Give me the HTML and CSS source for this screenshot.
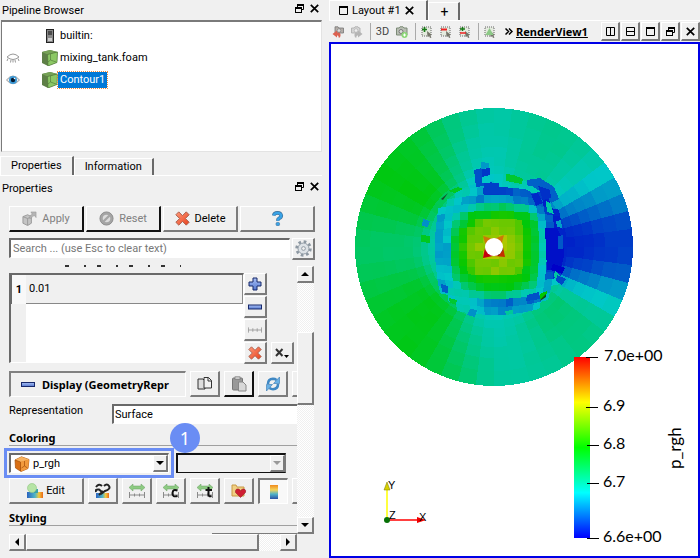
FILE: index.html
```html
<!DOCTYPE html>
<html lang="en">
<head>
<meta charset="utf-8">
<title>Contour1 - RenderView1</title>
<link rel="stylesheet" href="styles.css">
</head>
<body>
<svg class="defs" aria-hidden="true">
  <defs>
    <linearGradient id="gBlue" x1="0" y1="0" x2="0" y2="1"><stop offset="0" stop-color="#a9c0f5"/><stop offset="1" stop-color="#5578cf"/></linearGradient>
    <linearGradient id="gRed" x1="0" y1="0" x2="1" y2="1"><stop offset="0" stop-color="#ff9a7a"/><stop offset="1" stop-color="#e8401c"/></linearGradient>
    <linearGradient id="gMap" x1="0" y1="0" x2="0" y2="1"><stop offset="0" stop-color="#f08a1c"/><stop offset=".35" stop-color="#f4d35a"/><stop offset=".65" stop-color="#4fb3c8"/><stop offset="1" stop-color="#2b4fa5"/></linearGradient>
    <linearGradient id="gMapH"><stop offset="0" stop-color="#2b63c0"/><stop offset=".5" stop-color="#4fb6c8"/><stop offset=".75" stop-color="#f4c83a"/><stop offset="1" stop-color="#e8681c"/></linearGradient>
    <symbol id="float" viewBox="0 0 9 9"><path d="M2.5 3V.9H8.500V5.500H6.500" fill="none" stroke="#000"/><path d="M2 1H9" stroke="#000" stroke-width="2"/><rect x=".5" y="3.500" width="6" height="5" fill="none" stroke="#000"/><path d="M0 4H7" stroke="#000" stroke-width="2"/></symbol>
    <symbol id="close" viewBox="0 0 9 9"><path d="M.8.8 8.200 8.200M8.200.8.8 8.200" stroke="#000" stroke-width="1.700"/></symbol>
    <symbol id="cube" viewBox="0 0 16 16"><path d="M0 2 8 0 15.500 2 15 12.500 6 16 0 13Z" fill="#5e7f47"/><path d="M5.500 4.500 15.500 2 15 12.500 6 16Z" fill="#8cc865"/><path d="M0 2 8 0 15.500 2 5.500 4.500Z" fill="#76a256"/><path d="M5.500 4.500 15.500 2 15 12.500 6 16ZM8.500 4V10L14 12M8.500 10 6 12" fill="none" stroke="#4d7238" stroke-width=".6"/></symbol>
    <symbol id="cross" viewBox="0 0 14 14"><path d="M3.500.8 7 4.300 10.500.8 13.200 3.500 9.700 7 13.200 10.500 10.500 13.200 7 9.700 3.500 13.200.8 10.500 4.300 7 .8 3.500Z" fill="url(#gRed)" stroke="#a8604e" stroke-width=".9"/></symbol>
    <symbol id="range" viewBox="0 0 16 14"><path d="M0 3.500 4 0V2H12V0L16 3.500 12 7V5H4V7Z" fill="#8dcb82" stroke="#6b9e62" stroke-width=".5"/><path d="M.5 8V14M15.500 8V14M5.500 9.500V12.500M10.500 9.500V12.500M0 11H16" stroke="#8a8a8a" fill="none"/></symbol>
    <symbol id="select" viewBox="0 0 12 12"><rect x="1" y="1" width="9" height="9" fill="#e4eadf" stroke="#666" stroke-dasharray="1 1"/><path d="M6 5 11 9 9 9.300 10.500 11.500 9 12 8 9.800 6.500 11Z" fill="#75756a"/></symbol>
  </defs>
</svg>
<div class="app">
  <aside class="side">
    <header class="dock-title"><h2>Pipeline Browser</h2><button aria-label="Float pipeline"><svg><use href="#float"/></svg></button><button aria-label="Close pipeline"><svg><use href="#close"/></svg></button></header>
    <ul class="tree">
      <li><span class="eye"></span><svg class="node server" viewBox="0 0 8 14"><rect x=".5" y=".5" width="7" height="13" fill="#888" stroke="#222"/><path d="M2 3H6M2 5H6" stroke="#111"/><path d="M2 9H6V12H2Z" fill="#ccc"/></svg><span class="name">builtin:</span></li>
      <li><span class="eye"><svg viewBox="0 0 14 10"><path d="M1 4Q7-2 13 4M1 4Q7 9 13 4M2 5.500 1 8M5 7 4.500 9.500M9 7 9.500 9.500M12 5.500 13 8M7 7V9.500" fill="none" stroke="#999"/></svg></span><svg class="node"><use href="#cube"/></svg><span class="name">mixing_tank.foam</span></li>
      <li><span class="eye"><svg viewBox="0 0 14 10"><path d="M.5 5Q7-3 13.500 5 7 12.500.5 5Z" fill="#eee" stroke="#999"/><circle cx="7" cy="5" r="4" fill="#3e9bd8"/><circle cx="7" cy="5" r="2.200" fill="#061930"/><circle cx="8.500" cy="3.500" r=".8" fill="#fff"/></svg></span><svg class="node"><use href="#cube"/></svg><span class="name chosen">Contour1</span></li>
    </ul>
    <nav class="tabs"><button class="tab on">Properties</button><button class="tab">Information</button></nav>
    <header class="dock-title second"><h2>Properties</h2><button aria-label="Float properties"><svg><use href="#float"/></svg></button><button aria-label="Close properties"><svg><use href="#close"/></svg></button></header>
    <div class="actions">
      <button class="btn dark" disabled><svg viewBox="0 0 16 16"><path d="M1 6 6 4 10 6V13L6 15.500 1 13Z" fill="#c4c4c4" stroke="#999"/><path d="M1 6 6 8 10 6M6 8V15" stroke="#999" fill="none"/><path d="M8 8Q8 4 11 3.500L9.500 1H15V7L13.500 5Q10 5 10 8Z" fill="#b5b5b5" stroke="#999" stroke-width=".6"/></svg>Apply</button>
      <button class="btn dark" disabled><svg viewBox="0 0 16 16"><circle cx="8" cy="8" r="7" fill="#a5a5a5" stroke="#8c8c8c"/><circle cx="8" cy="8" r="4" fill="#dcdcdc"/><path d="M4.500 11.500 11.500 4.500" stroke="#a5a5a5" stroke-width="2.500"/></svg>Reset</button>
      <button class="btn"><svg><use href="#cross"/></svg>Delete</button>
      <button class="btn" aria-label="Help"><svg viewBox="0 0 14 14"><path d="M3.500 4.200Q4 1.800 7 1.800T10.500 4.400Q10.500 6 8.500 6.800 7.300 7.400 7.300 9" fill="none" stroke="#3a6f9c" stroke-width="3.400"/><path d="M3.500 4.200Q4 1.800 7 1.800T10.500 4.400Q10.500 6 8.500 6.800 7.300 7.400 7.300 9" fill="none" stroke="#39a3e6" stroke-width="2.200"/><rect x="5.700" y="10.700" width="3.200" height="3" rx="1" fill="#39a3e6" stroke="#3a6f9c" stroke-width=".6"/></svg></button>
    </div>
    <div class="find"><input class="search" type="text" aria-label="Search properties" placeholder="Search ... (use Esc to clear text)"><button class="btn" aria-label="Advanced"><svg viewBox="0 0 18 18"><circle cx="9" cy="9" r="7.200" fill="none" stroke="#8d98a2" stroke-width="3" stroke-dasharray="2.800 2.850"/><circle cx="9" cy="9" r="5.800" fill="#dde2e6" stroke="#8d98a2"/><circle cx="9" cy="9" r="2" fill="#f0f0f0" stroke="#8d98a2"/></svg></button></div>

    <div class="scroller">
      <div class="port">
        <div class="clipped" aria-hidden="true"></div>
        <div class="values">
          <table class="grid"><tbody><tr><th scope="row">1</th><td>0.01</td></tr></tbody></table>
          <div class="tools">
            <button class="btn" aria-label="Add value"><svg viewBox="0 0 14 14"><path d="M5 1H9V5H13V9H9V13H5V9H1V5H5Z" fill="url(#gBlue)" stroke="#17286b"/></svg></button>
            <button class="btn" aria-label="Remove value"><svg viewBox="0 0 14 14"><rect x=".5" y="5" width="13" height="4" fill="url(#gBlue)" stroke="#17286b"/></svg></button>
            <button class="btn" aria-label="Add range"><svg viewBox="0 0 16 14"><path d="M.5 4V10M15.500 4V10M5.500 5V9M10.500 5V9M0 7H16" stroke="#999" fill="none"/></svg></button>
            <button class="btn" aria-label="Remove all"><svg><use href="#cross"/></svg></button>
          </div>
          <button class="btn scale" aria-label="Scale"><svg viewBox="0 0 16 14"><path d="M2 3 8.500 10M8.500 3 2 10" stroke="#333" stroke-width="2"/><path d="M10 9H15L12.500 12Z"/></svg></button>
        </div>
        <div class="display">
          <button class="toggle"><svg viewBox="0 0 14 6"><rect x=".5" y=".5" width="13" height="4" fill="url(#gBlue)" stroke="#17286b"/></svg><span>Display (GeometryRepr</span></button>
          <button class="btn ic" aria-label="Copy"><svg viewBox="0 0 16 16"><path d="M1 3H6L8 5V13H1Z" fill="#ddd" stroke="#333"/><path d="M7 1.500H11.500L14.500 4.500V12H7Z" fill="#f2f2f2" stroke="#333"/><path d="M11 1.500V5H14.500" fill="none" stroke="#333"/></svg></button>
          <button class="btn ic dark" aria-label="Paste"><svg viewBox="0 0 16 16"><rect x="1.500" y="2" width="10" height="12" rx="1" fill="#999" stroke="#777"/><rect x="4" y=".8" width="5" height="2.500" fill="#ccc" stroke="#777" stroke-width=".7"/><path d="M7.500 6H12L15 9V15H7.500Z" fill="#d8d8d8" stroke="#888"/></svg></button>
          <button class="btn ic" aria-label="Reload"><svg viewBox="0 0 16 16"><path d="M3 8Q3 3 8 2.800 10 2.800 11.500 4" fill="none" stroke="#3f88c4" stroke-width="2.600"/><path d="M14.500 1V7.500H8.500Z" fill="#69b1e6" stroke="#3577ae" stroke-width=".6"/><path d="M13 8Q13 13 8 13.200 6 13.200 4.500 12" fill="none" stroke="#3f88c4" stroke-width="2.600"/><path d="M1.500 15V8.500H7.500Z" fill="#69b1e6" stroke="#3577ae" stroke-width=".6"/></svg></button>
          <button class="btn ic" aria-label="Save defaults"></button>
        </div>
        <div class="field"><label for="rep">Representation</label><input id="rep" type="text" value="Surface"></div>
        <h3>Coloring</h3>
        <div class="pick">
          <div class="combo marked">
            <svg class="solid" viewBox="0 0 16 16"><path d="M1 4 7.500.8 15 3.500 14 12.500 7 15.500 1.500 12Z" fill="#d96f14" stroke="#a34d08" stroke-width=".7"/><path d="M6.500 6 15 3.500 14 12.500 7 15.500Z" fill="#f29a3c"/><path d="M1 4 7.500.8 15 3.500 6.500 6Z" fill="#f7b25f"/><path d="M10.500 5V10L13.500 12M10.500 10 7.500 12M1 4 6.500 6V15" fill="none" stroke="#a34d08" stroke-width=".7"/></svg>
            <select aria-label="Color by"><option>p_rgh</option></select><span class="drop"></span>
            <span class="badge">1</span>
          </div>
          <div class="combo idle"><select aria-label="Component" disabled><option></option></select><span class="drop"></span></div>
        </div>
        <div class="maps">
          <button class="btn edit"><svg viewBox="0 0 16 16"><path d="M0 9H16V15H0Z" fill="url(#gMapH)"/><rect x="7" y="6" width="4" height="4" fill="#39a1ab"/><circle cx="5" cy="5" r="4.500" fill="#b6e4a5" stroke="#8fc580" stroke-width=".6"/></svg>Edit</button>
          <button class="btn ic" aria-label="Use separate color map"><svg viewBox="0 0 16 16"><path d="M1 10H14V15H1Z" fill="url(#gMapH)"/><path d="M1 4Q4 0 7 3M1 9Q0 6 4 6.500L7 9M9 3Q12 0 14 3T10 8L6 11M4 12 8 8" fill="none" stroke="#222" stroke-width="2"/></svg></button>
          <button class="btn ic" aria-label="Rescale to data range"><svg><use href="#range"/></svg></button>
          <button class="btn ic" aria-label="Rescale to custom range"><svg viewBox="0 0 16 14"><use href="#range"/><path d="M14.500 6.500Q10 4.500 9.500 9T14.500 12" fill="none" stroke="#111" stroke-width="2"/></svg></button>
          <button class="btn ic" aria-label="Rescale over time"><svg viewBox="0 0 16 14"><use href="#range"/><path d="M11.500 3V10.500Q11.500 13 14.500 12M8.500 6H15" fill="none" stroke="#111" stroke-width="2"/></svg></button>
          <button class="btn ic" aria-label="Choose preset"><svg viewBox="0 0 16 16"><path d="M1 2H5L6 4H13V13H1Z" fill="#f1cf83" stroke="#c89a45"/><path d="M9.500 14.500 4.500 9.500Q4 5.500 7.500 6 9 6.300 9.500 8 10.500 5.500 13 6 15.500 7 14.500 9.500Z" fill="#cf1f33" stroke="#8d1220" stroke-width=".5"/></svg></button>
          <button class="btn ic pressed" aria-label="Show color legend"><svg viewBox="0 0 16 16"><rect x="4" y="1" width="8" height="14" fill="url(#gMap)"/></svg></button>
          <button class="btn ic" aria-label="Edit legend"></button>
        </div>
        <h3>Styling</h3>
      </div>
      <div class="vbar"><button class="btn arrow up" aria-label="Scroll up"></button><i class="space"></i><i class="thumb"></i><i class="rest"></i><button class="btn arrow down" aria-label="Scroll down"></button></div>
    </div>
    <div class="hbar"><button class="btn arrow left" aria-label="Scroll left"></button><i class="thumb"></i><i class="rest"></i><button class="btn arrow right" aria-label="Scroll right"></button></div>
  </aside>

  <main class="main">
    <nav class="tabs top"><button class="tab on"><svg viewBox="0 0 9 9"><path d="M.5 1V8.500H8.500V1" fill="none" stroke="#000"/><path d="M0 1H9" stroke="#000" stroke-width="2"/></svg>Layout #1<svg><use href="#close"/></svg></button><button class="tab">+</button></nav>
    <div class="bar">
      <button class="tool" aria-label="Undo camera"><svg viewBox="0 0 12 12"><path d="M3 .8H6L7 2H11.500V7H3Z" fill="#b5aea9" stroke="#777" stroke-width=".8"/><circle cx="7" cy="4.500" r="1.800" fill="#ddd" stroke="#777" stroke-width=".6"/><path d="M8 11.500Q10 6 5 6.500V4.500L.5 8 5 11.500V9.500Q7 9 6.500 11.500Z" fill="#dc6150"/></svg></button>
      <button class="tool" aria-label="Redo camera"><svg viewBox="0 0 12 12"><path d="M.5 2H3L4 .8H7L8 2H9V7H.5Z" fill="#d4d4d4" stroke="#aaa" stroke-width=".8"/><circle cx="5" cy="4.500" r="1.800" fill="#eee" stroke="#aaa" stroke-width=".6"/><path d="M4 11.500Q2 6 7 6.500V4.500L11.500 8 7 11.500V9.500Q5 9 5.500 11.500Z" fill="#b5b5b5"/></svg></button>
      <i class="rule"></i>
      <button class="tool wide">3D</button>
      <button class="tool" aria-label="Adjust camera"><svg viewBox="0 0 12 12"><path d="M.5 2H3L4 .8H7L8 2H11V9H.5Z" fill="#b9bfb4" stroke="#7c8a76"/><circle cx="5" cy="5.500" r="2" fill="#ddd" stroke="#777"/><circle cx="8.500" cy="9" r="3" fill="#8cd878"/><path d="M7 9H10M8.500 7.500V10.500" stroke="#fff"/></svg></button>
      <i class="rule"></i>
      <button class="tool" aria-label="Add selection"><svg viewBox="0 0 12 12"><use href="#select"/><path d="M1 3.500H6M3.500 1V6" stroke="#187a18" stroke-width="1.600"/></svg></button>
      <button class="tool" aria-label="Subtract selection"><svg viewBox="0 0 12 12"><use href="#select"/><path d="M1 3.500H7" stroke="#e22" stroke-width="2"/></svg></button>
      <button class="tool" aria-label="Toggle selection"><svg viewBox="0 0 12 12"><use href="#select"/><path d="M1 3H6M3.500 1V5" stroke="#187a18" stroke-width="1.500"/><path d="M1 7H7" stroke="#e22" stroke-width="1.500"/></svg></button>
      <i class="rule"></i>
      <button class="tool" aria-label="Select cells"><svg viewBox="0 0 12 12"><use href="#select"/><path d="M1.500 9 5.500 2 9.500 9Z" fill="#8cc987"/></svg></button>
      <button class="more" aria-label="More tools"><svg viewBox="0 0 8 7"><path d="M.5.5 3.500 3.500.5 6.500M4 .5 7 3.500 4 6.500" fill="none" stroke="#000" stroke-width="1.500"/></svg></button>
      <a class="view" href="#view">RenderView1</a>
      <span class="wins">
        <button class="btn" aria-label="Split horizontal"><svg viewBox="0 0 9 9"><path d="M.5.5H8.500V8.500H.5ZM4.500 0V9" fill="none" stroke="#000"/></svg></button>
        <button class="btn" aria-label="Split vertical"><svg viewBox="0 0 9 9"><path d="M.5.5H8.500V8.500H.5ZM0 4.500H9" fill="none" stroke="#000"/></svg></button>
        <button class="btn" aria-label="Maximize"><svg viewBox="0 0 9 9"><path d="M.5 1V8.500H8.500V1" fill="none" stroke="#000"/><path d="M0 1H9" stroke="#000" stroke-width="2"/></svg></button>
        <button class="btn" aria-label="Float view"><svg><use href="#float"/></svg></button>
        <button class="btn" aria-label="Close view"><svg><use href="#close"/></svg></button>
      </span>
    </div>
    <div class="view3d" id="view">
      <svg class="scene" viewBox="331 44 367 512" role="img" aria-label="Pressure field on the tank">
        <defs><linearGradient id="legend" x1="0" y1="0" x2="0" y2="1"><stop offset="0" stop-color="#f00"/><stop offset=".25" stop-color="#ff0"/><stop offset=".5" stop-color="#0f0"/><stop offset=".75" stop-color="#0ff"/><stop offset="1" stop-color="#00f"/></linearGradient></defs>
        <g id="field" shape-rendering="crispEdges"></g>
        <g>
          <path d="M483 236 493 239 486 246ZM504 235 501 246 494 239Z" fill="#cc7808"/>
          <path d="M483 258 485 248 493 256Z" fill="#c40010"/><path d="M505 257 494 256 503 247Z" fill="#c43000"/><path d="M498 253 503 247 503 250 498 256Z" fill="#421a08"/>
          <circle cx="494" cy="247" r="9" fill="#fff"/>
          <path d="M441 199 448 193 443 200Z" fill="#174b2d"/>
          <path d="M541 299 546 294 546 297 540 301Z" fill="#154a18"/>
        </g>
        <rect x="574" y="357" width="16" height="181" fill="url(#legend)"/>
        <path d="M586 357.500H598M586 407.500H598M587 445.500H599M587 483.500H599M587 538.500H599" stroke="#000"/>
        <g class="ticks"><text x="604" y="361">7.0e+00</text><text x="603" y="411">6.9</text><text x="603" y="449">6.8</text><text x="603" y="487">6.7</text><text x="603" y="542">6.6e+00</text><text class="title" transform="translate(681 469) rotate(-90)">p_rgh</text></g>
        <g class="axes"><path d="M387 520V489" stroke="#ff0" stroke-width="1.500"/><path d="M384 490 387 482 390 490Z" fill="#d8d000" stroke="#777700" stroke-width=".5"/><path d="M387 520H418" stroke="#f00" stroke-width="1.500"/><path d="M417 517 426 520 417 523Z" fill="#e00"/><circle cx="387" cy="520" r="3" fill="#067006"/><text x="388" y="489">Y</text><text x="419" y="521">X</text><text x="389" y="519">Z</text></g>
      </svg>
    </div>
  </main>
</div>
<script src="field.js"></script>
</body>
</html>
```

FILE: styles.css
```css
* { box-sizing: border-box; }
html, body { height: 100%; margin: 0; }
body { background: #f0f0f0; color: #000; font: 11px/14px Roboto, "Liberation Sans", sans-serif; overflow: hidden; }
button, input, select { font: inherit; color: inherit; margin: 0; padding: 0; border-radius: 0; }
button { border: 0; background: none; display: flex; align-items: center; justify-content: center; }
h2, h3, ul { margin: 0; padding: 0; font-size: inherit; }
h2 { font-weight: 400; }
i { display: block; }
svg { display: block; flex: none; }
.defs { position: absolute; width: 0; height: 0; }

.app { display: flex; min-height: 100vh; }
.side { flex: 0 0 47%; display: flex; flex-direction: column; min-width: 0; padding: 0 7px 7px 0; }
.main { flex: 1; display: flex; flex-direction: column; min-width: 0; }

.dock-title { display: flex; align-items: center; height: 20px; padding: 2px 3px 0 2px; }
.dock-title h2 { flex: 1; }
.dock-title button { width: 9px; height: 9px; margin: 0 0 6px 6px; }
.dock-title svg { width: 9px; height: 9px; }
.dock-title.second { height: 30px; padding: 0 3px 4px 2px; }

.tree { list-style: none; height: 132px; margin-left: 1px; padding-top: 3px; background: #fff; border: solid; border-width: 2px 1px 1px; border-color: #7a7a7a #e3e3e3 #e3e3e3 #7a7a7a; }
.tree li { display: flex; align-items: center; height: 22px; }
.eye { width: 40px; padding-left: 4px; }
.eye svg { width: 14px; height: 10px; }
.node { width: 16px; height: 16px; }
.node.server { width: 16px; height: 14px; }
.name { padding: 1px 2px; }
.name.chosen { background: #0078d7; color: #fff; outline: 1px dotted #f08a3c; }

.tabs { display: flex; align-items: flex-end; height: 24px; border-bottom: 1px solid #fff; }
.tab { height: 17px; padding: 0 10px; gap: 4px; border: 1px solid #fff; border-width: 1px 2px 0 1px; border-right-color: #696969; }
.tab.on { height: 19px; }
.tab svg { width: 9px; height: 9px; }
.tabs.top { height: 21px; }
.tabs.top .tab.on { height: 20px; padding: 0 12px 0 9px; }
.tabs.top .tab + .tab { padding: 0 9px 0 12px; height: 18px; font-size: 14px; }

.btn { background: #f0f0f0; border: solid; border-width: 1px 2px 2px 1px; border-color: #fff #7b7b7b #7b7b7b #fff; }
.btn.dark { border-color: #fff #111 #111 #fff; }
.btn svg { width: 16px; height: 16px; }
.btn:disabled { color: #808080; }
.actions { display: grid; grid-template-columns: repeat(4, 1fr); gap: 2px; margin: 0 7px 0 9px; }
.actions .btn { height: 26px; gap: 5px; }
.actions .btn svg { width: 15px; height: 15px; }
.find { display: flex; gap: 2px; margin: 6px 7px 5px 9px; }
.find .btn { width: 23px; height: 22px; }
.find .btn svg { width: 17px; height: 17px; }
input[type=text] { background: #fff; border: solid; border-width: 2px 1px 1px 2px; border-color: #696969 #fff #fff #696969; outline: 0; }
.search { flex: 1; min-width: 0; height: 20px; padding: 0 2px; }
.search::placeholder { color: #777; opacity: 1; }

.scroller { flex: 1; display: flex; min-height: 0; margin-right: 8px; }
.port { flex: 1; min-width: 0; position: relative; padding-left: 9px; overflow: hidden; }
.clipped { width: 116px; height: 2px; margin: 0 0 6px 56px; background: repeating-linear-gradient(90deg, #333 0 4px, transparent 4px 19px, #333 19px 21px, transparent 21px 32px); }
.values { display: flex; align-items: flex-end; height: 91px; }
.grid { flex: none; display: block; width: 235px; height: 90px; margin-bottom: 1px; border-spacing: 0; background: linear-gradient(90deg, #f0f0f0 15px, #fff 15px); border: solid; border-width: 2px 1px 1px 2px; border-color: #696969 #fff #fff #696969; }
.grid tbody { display: block; }
.grid tr { display: flex; height: 29px; background: #f0f0f0; }
.grid th { width: 15px; border-left: 1px solid #696969; background: #f8f8f8; line-height: 29px; padding: 0; }
.grid td { flex: 1; padding: 0 3px; line-height: 27px; border: solid #888; border-width: 0 1px 1px 0; }
.tools .btn { width: 23px; height: 22px; margin-top: 1px; }
.tools .btn svg { width: 14px; height: 14px; }
.scale { flex: none; width: 23px; height: 22px; margin-left: 4px; }
.display, .maps, .pick { display: flex; }
.display { gap: 4px; margin-top: 7px; height: 26px; }
.toggle { flex: none; width: 177px; justify-content: flex-start; gap: 7px; padding-left: 10px; border: solid; border-width: 2px 1px 1px 2px; border-color: #808080 #fff #fff #808080; overflow: hidden; font: bold 11px/14px "Noto Sans", sans-serif; white-space: nowrap; }
.toggle svg { width: 14px; height: 6px; }
.ic { flex: none; width: 30px; }
.field { display: flex; margin-top: 7px; height: 20px; }
.field label { flex: none; width: 103px; }
.field input { flex: 1; min-width: 0; padding: 0 1px; border-right: 0; }
h3 { height: 15px; font: bold 11px/14px "Noto Sans", sans-serif; border-bottom: 1px solid #a0a0a0; }
.field + h3 { margin-top: 7px; }
.pick { margin-top: 7px; gap: 7px; }
.combo { flex: none; position: relative; display: flex; align-items: center; width: 160px; height: 20px; background: #fff; border: solid; border-width: 2px 1px 1px 2px; border-color: #696969 #fff #fff #696969; }
.combo select { flex: 1; min-width: 0; height: 17px; border: 0; background: none; appearance: none; padding-left: 3px; outline: 0; }
.solid { width: 16px; height: 16px; margin-left: 3px; }
.drop { width: 15px; height: 17px; background: #f0f0f0; border: solid; border-width: 1px 2px 2px 1px; border-color: #fff #7b7b7b #7b7b7b #fff; display: grid; place-items: center; pointer-events: none; }
.drop::before { content: ""; border: solid transparent; border-width: 4px 4px 0; border-top-color: #000; }
.idle { width: 110px; background: #f0f0f0; border-color: #111 #7b7b7b #111 #111; }
.idle .drop::before { border-top-color: #999; }
.marked { z-index: 1; outline: 3px solid #6a8df4; outline-offset: 2px; }
.badge { position: absolute; left: 159px; top: -32px; width: 30px; height: 30px; border-radius: 50%; background: #6a8df4; color: #fff; font: 18px/30px "Noto Sans", sans-serif; text-align: center; }
.maps { gap: 4px; margin-top: 5px; height: 26px; }
.edit { flex: none; width: 75px; gap: 3px; }
.pressed { background: #f8f8f8; border-width: 2px 1px 1px 2px; border-color: #7b7b7b #fff #fff #7b7b7b; }
.maps + h3 { margin-top: 7px; }

.vbar { flex: none; width: 17px; display: flex; flex-direction: column; padding-top: 1px; }
.space, .rest { background: repeating-conic-gradient(#fff 0 25%, #f0f0f0 0 50%) 0 0 / 2px 2px; }
.arrow { flex: none; width: 17px; height: 17px; }
.arrow::before { content: ""; border: 4px solid transparent; }
.up::before { border-top-width: 0; border-bottom-color: #000; }
.down::before { border-bottom-width: 0; border-top-color: #000; }
.left::before { border-left-width: 0; border-right-color: #000; }
.right::before { border-right-width: 0; border-left-color: #000; }
.vbar .space { flex: 50; }
.vbar .thumb { flex: 71; }
.vbar .rest { flex: 113; }
.thumb { background: #f0f0f0; border: solid; border-width: 1px 2px 2px 1px; border-color: #fff #7b7b7b #7b7b7b #fff; }
.hbar { position: relative; display: flex; height: 17px; margin: 0 25px 0 9px; }
.hbar::before { content: ""; position: absolute; right: 0; top: -1px; width: 85px; height: 1px; background: #7b7b7b; }
.hbar .thumb { flex: 233; }
.hbar .rest { flex: 21; }

.bar { display: flex; align-items: center; height: 21px; padding-left: 3px; }
.tool { flex: none; width: 12px; height: 12px; margin-right: 7px; }
.tool svg { width: 12px; height: 12px; }
.tool.wide { width: 13px; color: #444; }
.rule { flex: none; width: 1px; height: 17px; margin-right: 5px; background: #aaa; }
.more { margin-left: 2px; }
.more svg { width: 8px; height: 7px; }
.view { margin-left: 3px; color: #000; font: bold 11px/14px "Noto Sans", sans-serif; }
.wins { display: flex; gap: 1px; margin-left: auto; }
.wins .btn { width: 19px; height: 19px; }
.wins svg { width: 9px; height: 9px; }

.view3d { flex: 1; min-height: 0; position: relative; background: #fff; border: 2px solid #0000e6; }
.scene { position: absolute; inset: 0; width: 100%; height: 100%; }
.ticks { font: 16px Lato, sans-serif; }
.title { font-size: 17px; }
.axes { font: 11px "Liberation Sans", sans-serif; }
```

FILE: field.js
```js
// Draws the cell colours of the pressure field: polar cells outside, square cells round the shaft.
const NS = "http://www.w3.org/2000/svg";
const g = document.getElementById("field");
const CX = 494, CY = 247;

function color(t, k = 200) {
  const s = Math.max(0, Math.min(1, t)) * 4;
  const c = s < 1 ? [0, s, 1] : s < 2 ? [0, 1, 2 - s] : s < 3 ? [s - 2, 1, 0] : [1, 4 - s, 0];
  return "rgb(" + c.map(v => Math.round(v * k)).join(",") + ")";
}
function add(d, t) {
  const p = document.createElementNS(NS, "path");
  p.setAttribute("d", d);
  p.setAttribute("fill", color(t));
  g.appendChild(p);
}
function lerpTable(tab, a) {
  a = ((a % 360) + 360) % 360;
  for (let i = 1; i < tab.length; i++) {
    if (a <= tab[i][0]) {
      const [a0, v0] = tab[i - 1], [a1, v1] = tab[i];
      return v0 + (v1 - v0) * (a - a0) / (a1 - a0);
    }
  }
}
// angle (degrees, counter-clockwise from +x), value
const outer = [[0,.07],[10,.09],[17,.14],[23,.18],[30,.22],[36,.27],[45,.30],[60,.33],[75,.31],[90,.29],[100,.31],[110,.35],[120,.41],[130,.45],[145,.48],[155,.46],[170,.40],[180,.37],[190,.39],[200,.42],[215,.46],[230,.47],[240,.45],[250,.40],[260,.35],[270,.31],[280,.30],[300,.32],[315,.34],[325,.32],[332,.27],[338,.23],[345,.15],[352,.09],[360,.07]];
const middle = [[0,.04],[10,.05],[18,.09],[26,.15],[34,.22],[42,.27],[55,.31],[70,.31],[90,.27],[105,.28],[120,.36],[132,.46],[145,.49],[158,.44],[170,.38],[180,.36],[192,.38],[205,.44],[225,.48],[238,.44],[250,.34],[262,.29],[275,.28],[290,.31],[305,.36],[320,.36],[330,.28],[340,.14],[350,.06],[360,.04]];
const inner = [[0,.05],[15,.03],[30,.12],[45,.10],[55,.15],[68,.28],[80,.25],[90,.23],[105,.18],[115,.27],[130,.29],[145,.29],[160,.27],[175,.27],[190,.27],[205,.28],[220,.30],[235,.30],[250,.25],[265,.25],[280,.25],[295,.24],[310,.22],[322,.26],[332,.12],[342,.03],[352,.03],[360,.05]];

const rings = [44, 52, 59, 66, 73, 81, 90, 100, 111, 124, 139];
const pt = (r, a) => {
  const q = a * Math.PI / 180;
  return (CX + r * Math.cos(q)).toFixed(1) + " " + (CY - r * Math.sin(q)).toFixed(1);
};
for (let k = rings.length - 2; k >= 0; k--) {
  const r0 = rings[k], r1 = rings[k + 1], r = (r0 + r1) / 2;
  const step = 7.5;
  for (let a = 0; a < 360; a += step) {
    const m = a + step / 2;
    let t;
    if (r < 60) t = lerpTable(inner, m);
    else if (r < 80) { const w = (r - 56) / 24; t = lerpTable(inner, m) * (1 - w) + lerpTable(middle, m) * w; }
    else { const w = Math.min(1, (r - 80) / 45); t = lerpTable(middle, m) * (1 - w) + lerpTable(outer, m) * w; }
    t += Math.sin(a * 7.3 + k * 4.1) * .003;
    add(`M${pt(r0, a)}L${pt(r1, a)}A${r1} ${r1} 0 0 0 ${pt(r1, a + step)}L${pt(r0, a + step)}Z`, t);
  }
}
// Block cells, 8 units wide and bowed in at the corners; each letter is one step of 0.04 from "a".
const rows = [
  "..hhgfccccdddcb.",
  ".hgffeffffeeddb.",
  "gggghijjkjiigecb",
  "fghjmmmnnnmmjfdb",
  "fgjlnpqqqqpmlgdb",
  "fgknpqqrqqpnlhdb",
  "fglnqqrrsrqnlhcb",
  "ffloqrrssrqnlhcb",
  "fflnqqssrrqnlhcb",
  "fflnpqqqrqqnlhcb",
  "ggkmoqqrqqpmlgcb",
  "ggjlmnnnnnnmkgdc",
  "fghjklmmmmlkjgfg",
  "ghhhiijjjiihhgfi",
  ".ghhgfeeedeedeg.",
  "..hhggffeefffg.."
];
const node = (i, j) => {
  const x = 435 + i * 8 - CX, y = 187 + j * 8 - CY;
  const fx = 1 - .13 * (y / 64) ** 2, fy = 1 - .13 * (x / 64) ** 2;
  return (CX + x * fx).toFixed(1) + " " + (CY + y * fy).toFixed(1);
};
rows.forEach((row, j) => [...row].forEach((ch, i) => {
  if (ch === ".") return;
  const wob = Math.sin(i * 5.1 + j * 3.7) * .008;
  add(`M${node(i, j)}L${node(i + 1, j)}L${node(i + 1, j + 1)}L${node(i, j + 1)}Z`, (ch.charCodeAt(0) - 97) * .04 + wob);
}));
// Single cells of the blade wakes
[
  ["M474 170 482 168 484 176 484 186 476 187Z", .10],
  ["M482 169 490 168 490 175 482 177Z", .07],
  ["M481 162 489 163 489 168 481 169Z", .19],
  ["M484 182 499 183 499 194 483 194Z", .08],
  ["M482 177 490 177 490 183 482 183Z", .25],
  ["M506 174 514 175 523 179 522 184 506 181Z", .44],
  ["M448 191 458 187 463 189 455 193Z", .46],
  ["M423 219 430 221 428 227 422 226Z", .18],
  ["M421 235 430 236 430 243 421 242Z", .46],
  ["M527 180 540 178 554 187 559 199 551 203 545 193 527 185Z", .12],
  ["M525 188 532 186 541 192 532 193Z", .27],
  ["M538 186 550 190 551 198 543 200Z", .06],
  ["M531 194 538 193 543 203 536 206Z", .05],
  ["M546 201 550 203 554 214 547 212Z", .29],
  ["M545 228 557 228 563 240 564 256 561 268 547 270Z", .02],
  ["M558 236 563 235 563 249 558 249Z", .11],
  ["M556 221 561 220 562 228 557 227Z", .20],
  ["M553 264 565 268 562 274 551 270Z", 0],
  ["M555 271 560 275 556 280 554 276Z", .30],
  ["M557 275 566 279 562 285 556 281Z", .09],
  ["M441 284 448 286 448 293 442 292Z", .12],
  ["M449 298 457 300 456 305 450 303Z", .44],
  ["M470 309 477 310 475 317 467 315Z", .18],
  ["M527 295 539 292 540 299 526 301Z", .10],
  ["M540 294 547 291 546 297 540 299Z", .50],
  ["M505 311 513 310 513 314 506 315Z", .31]
].forEach(([d, t]) => add(d, t));
```
